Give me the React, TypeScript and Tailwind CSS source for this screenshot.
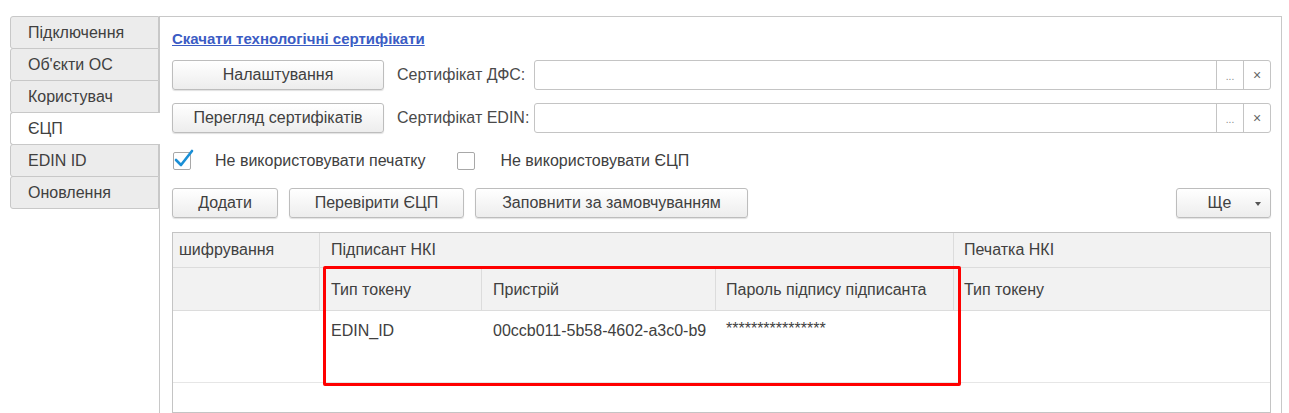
import React from 'react'

const tabs = ['Підключення', "Об'єкти ОС", 'Користувач', 'ЄЦП', 'EDIN ID', 'Оновлення']

function Btn({ children, className = '' }: { children: React.ReactNode; className?: string }) {
    return (
        <button
            type="button"
            className={`h-[30px] flex items-center justify-center rounded-[3px] border border-[#bdbdbd] bg-gradient-to-b from-white to-[#ededed] shadow-[0_1px_1px_rgba(0,0,0,0.12)] text-[16px] text-[#404040] ${className}`}
        >
            {children}
        </button>
    )
}

function CertField({ label, buttonText }: { label: string; buttonText: string }) {
    return (
        <div className="flex items-center h-[30px]">
            <Btn className="w-[212px]">{buttonText}</Btn>
            <span className="ml-[13px] w-[137px] text-[#4a4a4a]">{label}</span>
            <div className="flex-1 h-[30px] flex rounded-[3px] border border-[#c4c4c4] bg-white">
                <div className="flex-1" />
                <div className="w-[27px] border-l border-[#c4c4c4] flex items-end justify-center pb-[7px] text-[10px] leading-none text-[#888]">...</div>
                <div className="w-[27px] border-l border-[#c4c4c4] flex items-center justify-center text-[14px] text-[#666]">×</div>
            </div>
        </div>
    )
}

function Checkbox({ checked }: { checked: boolean }) {
    return (
        <div className="relative w-[18px] h-[18px] rounded-[2px] border border-[#a8a8a8] bg-white">
            {checked && (
                <svg className="absolute -left-[1px] -top-[5px]" width="22" height="22" viewBox="0 0 22 22">
                    <path d="M3 12 L8 17 L19 3" fill="none" stroke="#1a8fd6" strokeWidth="2.6" strokeLinecap="round" strokeLinejoin="round" />
                </svg>
            )}
        </div>
    )
}

export default function App() {
    return (
        <div className="w-[1289px] h-[413px] overflow-hidden bg-white pt-[16px] pl-[10px] flex font-['Liberation_Sans',Arial,sans-serif] text-[16px] text-[#404040]">
            <div className="w-[149px] flex flex-col shrink-0">
                {tabs.map((t) => {
                    const active = t === 'ЄЦП'
                    return (
                        <div
                            key={t}
                            className={
                                active
                                    ? 'h-[33px] -mr-[1px] relative z-10 flex items-center pl-[17px] rounded-l-[3px] border border-r-0 border-[#c8c8c8] bg-white -mt-[1px] first:mt-0'
                                    : 'h-[33px] flex items-center pl-[17px] rounded-l-[3px] border border-[#c8c8c8] bg-[#ececec] -mt-[1px] first:mt-0'
                            }
                        >
                            {t}
                        </div>
                    )
                })}
            </div>

            <div className="flex-1 mr-[7px] border-t border-l border-r border-[#c8c8c8] pl-[12px] pr-[10px] flex flex-col">
                <a href="#" className="mt-[14px] h-[16px] leading-[16px] text-[15px] font-bold text-[#3b5cc4] underline self-start">
                    Скачати технологічні сертифікати
                </a>
                <div className="mt-[13px]">
                    <CertField buttonText="Налаштування" label="Сертифікат ДФС:" />
                </div>
                <div className="mt-[13px]">
                    <CertField buttonText="Перегляд сертифікатів" label="Сертифікат EDIN:" />
                </div>

                <div className="mt-[18px] h-[19px] flex items-center">
                    <div className="ml-[1px]"><Checkbox checked /></div>
                    <span className="ml-[24px]">Не використовувати печатку</span>
                    <div className="ml-[32px]"><Checkbox checked={false} /></div>
                    <span className="ml-[25px]">Не використовувати ЄЦП</span>
                </div>

                <div className="mt-[18px] flex items-center">
                    <Btn className="w-[106px]">Додати</Btn>
                    <Btn className="w-[175px] ml-[11px]">Перевірити ЄЦП</Btn>
                    <Btn className="w-[273px] ml-[11px]">Заповнити за замовчуванням</Btn>
                    <Btn className="w-[95px] ml-auto relative">
                        <span className="ml-[-8px]">Ще</span>
                        <span className="absolute right-[9px] top-[13px] w-0 h-0 border-l-[3px] border-r-[3px] border-t-[4px] border-l-transparent border-r-transparent border-t-[#555]" />
                    </Btn>
                </div>

                <div className="mt-[14px] relative h-[200px] border border-[#c4c4c4] bg-white">
                    <div className="grid grid-cols-[147px_162px_234px_238px_1fr] grid-rows-[35px_43px_72px]">
                        <div className="bg-[#f2f2f2] border-b border-r border-[#dcdcdc] flex items-center pl-[6px] whitespace-nowrap overflow-hidden">шифрування</div>
                        <div className="col-span-3 bg-[#f2f2f2] border-b border-r border-[#dcdcdc] flex items-center pl-[11px]">Підписант НКІ</div>
                        <div className="bg-[#f2f2f2] border-b border-[#dcdcdc] flex items-center pl-[10px]">Печатка НКІ</div>

                        <div className="bg-[#f2f2f2] border-b border-r border-[#dcdcdc]" />
                        <div className="bg-[#f2f2f2] border-b border-r border-[#dcdcdc] pl-[11px] pt-[10px]">Тип токену</div>
                        <div className="bg-[#f2f2f2] border-b border-r border-[#dcdcdc] pl-[11px] pt-[10px]">Пристрій</div>
                        <div className="bg-[#f2f2f2] border-b border-r border-[#dcdcdc] pl-[10px] pt-[10px] whitespace-nowrap overflow-hidden">Пароль підпису підписанта</div>
                        <div className="bg-[#f2f2f2] border-b border-[#dcdcdc] pl-[10px] pt-[10px]">Тип токену</div>

                        <div className="border-b border-[#e6e6e6]" />
                        <div className="border-b border-[#e6e6e6] pl-[11px] pt-[8px]">EDIN_ID</div>
                        <div className="border-b border-[#e6e6e6] pl-[11px] pt-[8px] whitespace-nowrap overflow-hidden">00ccb011-5b58-4602-a3c0-b9</div>
                        <div className="border-b border-[#e6e6e6] pl-[10px] pt-[6px] text-[16px] whitespace-nowrap overflow-hidden">****************</div>
                        <div className="border-b border-[#e6e6e6]" />
                    </div>

                    <div className="absolute left-[150px] top-[33px] w-[638px] h-[120px] border-[3px] border-[#ff0000] rounded-[2px]" />
                </div>
            </div>
        </div>
    )
}
